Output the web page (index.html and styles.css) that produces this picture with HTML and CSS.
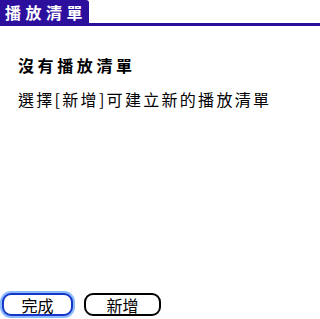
FILE: index.html
```html
<!DOCTYPE html>
<html lang="zh-Hant">
<head>
<meta charset="utf-8">
<link rel="stylesheet" href="styles.css">
</head>
<body>
<div class="screen">
  <div class="titlebar">
    <div class="tab">播放清單</div>
  </div>
  <div class="content">
    <h1 class="heading">沒有播放清單</h1>
    <p class="hint">選擇[新增]可建立新的播放清單</p>
  </div>
  <div class="buttons">
    <button class="btn focused">完成</button>
    <button class="btn add">新增</button>
  </div>
</div>
</body>
</html>
```
FILE: styles.css
```css
html, body {
  margin: 0;
  padding: 0;
  background: #ffffff;
}
.screen {
  width: 320px;
  height: 319px;
  display: flex;
  flex-direction: column;
  font-family: "Noto Sans CJK TC", "Noto Sans", sans-serif;
  color: #000;
}
.titlebar {
  display: flex;
  border-bottom: 3px solid #2d0f9e;
  height: 23px;
}
.tab {
  width: 89px;
  height: 23px;
  background: #2d0f9e;
  color: #fff;
  font-weight: bold;
  font-size: 16px;
  line-height: 24px;
  letter-spacing: 4.5px;
  padding-left: 5px;
  box-sizing: border-box;
  border-top-right-radius: 3px;
}
.content {
  flex: 1;
  padding-left: 18px;
}
.heading {
  margin: 31px 0 0 0;
  font-size: 16px;
  line-height: 16px;
  font-weight: bold;
  letter-spacing: 3.6px;
}
.hint {
  margin: 18px 0 0 0;
  font-size: 16px;
  line-height: 16px;
  letter-spacing: 2.3px;
}
.buttons {
  display: flex;
  align-items: flex-start;
  gap: 11px;
  padding: 0 0 3px 2px;
}
.btn {
  font-family: inherit;
  font-size: 16px;
  line-height: 18px;
  background: #fff;
  color: #000;
  border: 2px solid #000;
  border-radius: 9px;
  padding: 0;
  height: 23px;
  margin: 0;
}
.focused {
  width: 71px;
  border-color: #1536c8;
  box-shadow: 0 0 0 2px #8cbcff;
}
.add {
  width: 77px;
}
```
